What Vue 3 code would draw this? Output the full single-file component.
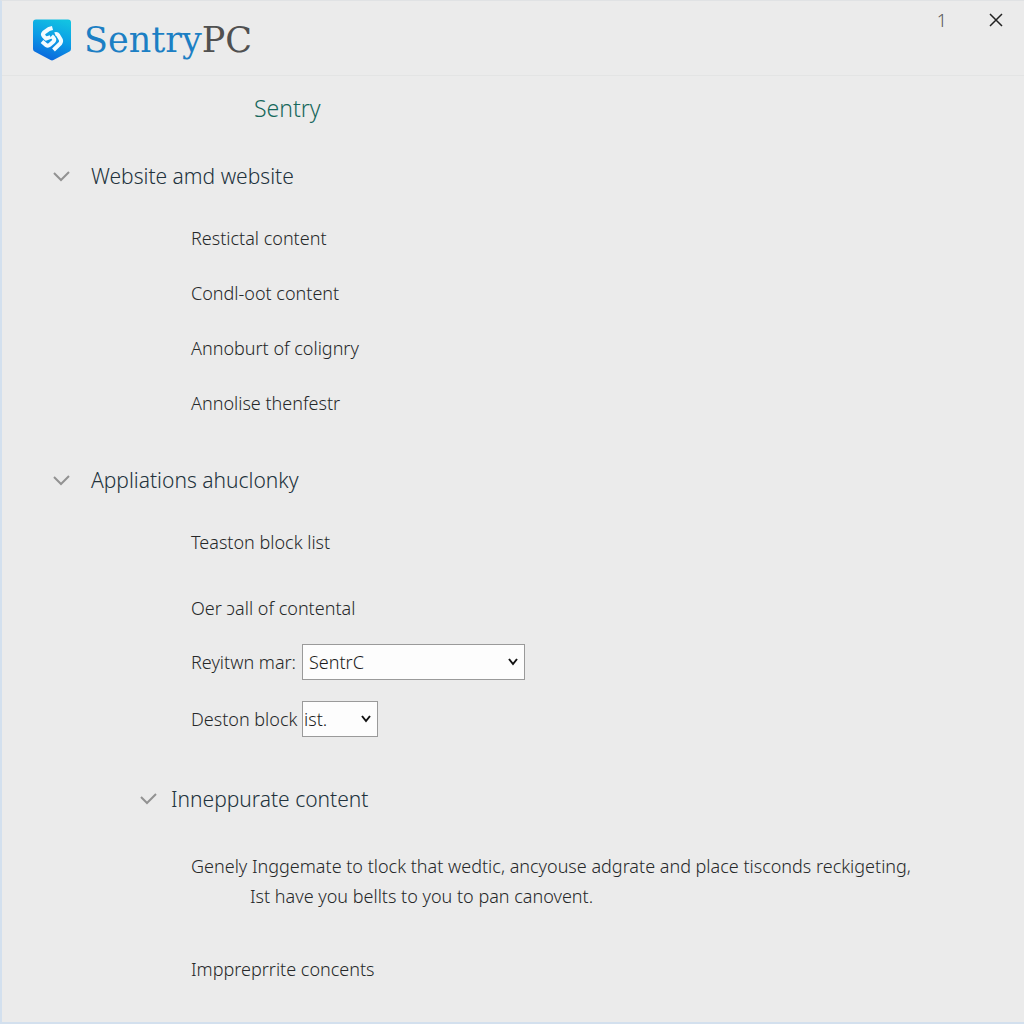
<template>
  <div class="window">
    <header class="titlebar">
      <div class="logo">
        <svg class="logo-mark" viewBox="0 0 38 42" width="38" height="42" aria-hidden="true">
          <defs>
            <linearGradient id="shield" x1="0.7" y1="0" x2="0.4" y2="1">
              <stop offset="0" stop-color="#12c2e2" />
              <stop offset="0.5" stop-color="#0b9be6" />
              <stop offset="1" stop-color="#0a66dc" />
            </linearGradient>
          </defs>
          <path fill="url(#shield)" d="M3 0.5h32a3 3 0 0 1 3 3V30a3 3 0 0 1-1.5 2.6L20.5 41a3 3 0 0 1-3 0L1.5 32.6A3 3 0 0 1 0 30V3.5a3 3 0 0 1 3-3z" />
          <g fill="none" stroke="#f2fbff" stroke-width="4" stroke-linejoin="round">
            <path d="M19.500 9l-3.500 1-5 3.500q-2 2 0 4l2 2.200 4.500-1.700" />
            <path d="M9 22.500l4 3.500q2 1.200 3.500 0l4-3.500q1.500-1.800 0-3.500l-2-2" />
            <path d="M22 15.200q2-.8 3.200 1l2.500 4.300q1 2-.5 4l-6.700 6.500" />
          </g>
        </svg>
        <span class="logo-text">Sentry<span class="logo-suffix">PC</span></span>
      </div>
      <div class="window-controls">
        <span class="counter">1</span>
        <button class="close-btn" type="button" aria-label="Close">
          <svg viewBox="0 0 14 14" width="14" height="14">
            <path fill="none" stroke="#222" stroke-width="1.5" d="M1 1l12 12M13 1L1 13" />
          </svg>
        </button>
      </div>
    </header>

    <main class="content">
      <h1 class="page-title">Sentry</h1>

      <section v-for="section in sections" :key="section.title" class="section">
        <button class="section-head" type="button" @click="section.open = !section.open">
          <svg class="chevron" viewBox="0 0 18 12" width="18" height="12">
            <path fill="none" stroke="#929292" stroke-width="2" d="M2 3l7 7 8-8" />
          </svg>
          <span>{{ section.title }}</span>
        </button>
        <ul v-show="section.open" class="items" :class="{ loose: section.loose }">
          <li v-for="item in section.items" :key="item">{{ item }}</li>
        </ul>
      </section>

      <form class="fields" @submit.prevent>
        <div class="field">
          <label for="review">Reyitwn mar:</label>
          <div class="select-box">
            <select id="review" v-model="review">
              <option>SentrC</option>
            </select>
            <svg class="arrow" viewBox="0 0 10 8" width="10" height="8">
              <path fill="none" stroke="#111" stroke-width="2" d="M1 1l4 5 4-5" />
            </svg>
          </div>
        </div>
        <div class="field">
          <label for="block">Deston block</label>
          <div class="select-box small">
            <select id="block" v-model="block">
              <option>ist.</option>
            </select>
            <svg class="arrow" viewBox="0 0 10 8" width="10" height="8">
              <path fill="none" stroke="#111" stroke-width="2" d="M1 1l4 5 4-5" />
            </svg>
          </div>
        </div>
      </form>

      <section class="subsection">
        <button class="section-head nested" type="button" @click="detailsOpen = !detailsOpen">
          <svg class="chevron" viewBox="0 0 18 12" width="18" height="12">
            <path fill="none" stroke="#929292" stroke-width="2" d="M1 4l6 6 9-9" />
          </svg>
          <span>Inneppurate content</span>
        </button>
        <div v-show="detailsOpen" class="details">
          <p>Genely Inggemate to tlock that wedtic, ancyouse adgrate and place tisconds reckigeting,</p>
          <p class="indent">Ist have you bellts to you to pan canovent.</p>
          <p class="last">Imppreprrite concents</p>
        </div>
      </section>
    </main>
  </div>
</template>

<script setup>
import { ref } from 'vue'

const sections = ref([
  {
    title: 'Website amd website',
    open: true,
    loose: false,
    items: ['Restictal content', 'Condl-oot content', 'Annoburt of colignry', 'Annolise thenfestr']
  },
  {
    title: 'Appliations ahuclonky',
    open: true,
    loose: true,
    items: ['Teaston block list', 'Oer ɔall of contental']
  }
])

const review = ref('SentrC')
const block = ref('ist.')
const detailsOpen = ref(true)
</script>

<style>
body {
  margin: 0;
  background: #ebebeb;
}
</style>

<style scoped>
.window {
  box-sizing: border-box;
  min-height: 100vh;
  border-left: 2px solid #d3e0ee;
  border-bottom: 2px solid #d3e0ee;
  border-top: 1px solid #e0e2e4;
  background: #ebebeb;
  color: #262829;
  font-family: 'Noto Sans', 'Open Sans', sans-serif;
  font-size: 18px;
  font-weight: 300;
}

.titlebar {
  box-sizing: border-box;
  display: flex;
  justify-content: space-between;
  align-items: flex-start;
  height: 75px;
  padding-left: 31px;
  border-bottom: 1px solid #e3e4e4;
}

.logo {
  display: flex;
  align-items: center;
  gap: 13px;
  padding-top: 18px;
}

.logo-text {
  font-family: 'DejaVu Serif', serif;
  font-size: 35px;
  font-weight: 400;
  line-height: 42px;
  color: #1c7fc4;
}

.logo-suffix {
  color: #505050;
}

.window-controls {
  display: flex;
  align-items: center;
  gap: 42px;
  padding: 6px 21px 0 0;
}

.counter {
  font-size: 18px;
  line-height: 26px;
  color: #555;
}

.close-btn {
  display: flex;
  padding: 0;
  border: 0;
  background: none;
  cursor: pointer;
}

.content {
  padding: 16px 24px 24px 50px;
}

.page-title {
  margin: 0 0 36px 202px;
  font-size: 23px;
  font-weight: 300;
  line-height: 32px;
  color: #17685c;
}

.section + .section {
  margin-top: 33px;
}

.section-head {
  display: flex;
  align-items: center;
  gap: 21px;
  padding: 0;
  border: 0;
  background: none;
  color: #22323c;
  font: inherit;
  font-size: 21px;
  line-height: 32px;
  cursor: pointer;
}

.section-head.nested {
  gap: 13px;
  margin-left: 88px;
}

.items {
  margin: 19px 0 0 139px;
  padding: 0;
  list-style: none;
  line-height: 55px;
}

.items.loose li + li {
  margin-top: 11px;
}

.fields {
  display: flex;
  flex-direction: column;
  gap: 21px;
  margin: 8px 0 0 139px;
}

.field {
  display: flex;
  align-items: center;
}

.field label {
  width: 111px;
  white-space: nowrap;
}

.select-box {
  position: relative;
  width: 223px;
}

.select-box.small {
  width: 76px;
}

.select-box select {
  display: block;
  box-sizing: border-box;
  width: 100%;
  height: 36px;
  padding: 0 24px 0 6px;
  appearance: none;
  border: 1px solid #9a9a9a;
  border-radius: 0;
  background: #fdfdfd;
  color: #1c1c1c;
  font: inherit;
}

.select-box.small select {
  padding-left: 1px;
}

.arrow {
  position: absolute;
  top: 14px;
  right: 7px;
  pointer-events: none;
}

.subsection {
  margin-top: 46px;
}

.details {
  margin: 36px 0 0 139px;
}

.details p {
  margin: 0;
  line-height: 30px;
}

.details .indent {
  margin-left: 59px;
}

.details .last {
  margin-top: 43px;
}
</style>
